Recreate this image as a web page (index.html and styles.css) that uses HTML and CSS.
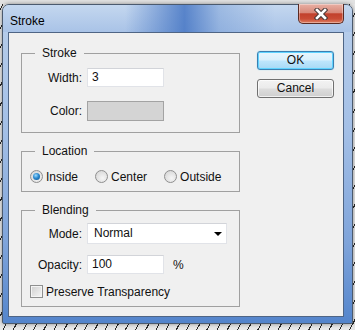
FILE: index.html
```html
<!DOCTYPE html>
<html lang="en">
<head>
  <meta charset="UTF-8" />
  <title>Stroke</title>
  <link rel="stylesheet" href="styles.css">
</head>
<body>

<div class="window">
  <div class="titlebar">
    <span class="title">Stroke</span>
    <div class="close">
      <svg width="14" height="12" viewBox="0 0 14 12">
        <path d="M3 2 L11 10 M11 2 L3 10" stroke="#4a3a38" stroke-width="4.6" stroke-linecap="square" fill="none"/>
        <path d="M3 2 L11 10 M11 2 L3 10" stroke="#ffffff" stroke-width="2.6" stroke-linecap="square" fill="none"/>
      </svg>
    </div>
  </div>

  <div class="client">
    <div class="groups">

      <fieldset class="group group-stroke">
        <legend>Stroke</legend>
        <div class="row">
          <label>Width:</label>
          <div class="field">3</div>
        </div>
        <div class="row row-color">
          <label>Color:</label>
          <div class="swatch"></div>
        </div>
      </fieldset>

      <fieldset class="group group-location">
        <legend>Location</legend>
        <div class="radios">
          <div class="radio-item"><span class="radio checked"></span>Inside</div>
          <div class="radio-item"><span class="radio"></span>Center</div>
          <div class="radio-item"><span class="radio"></span>Outside</div>
        </div>
      </fieldset>

      <fieldset class="group group-blending">
        <legend>Blending</legend>
        <div class="row">
          <label>Mode:</label>
          <div class="select">Normal<span class="arrow"></span></div>
        </div>
        <div class="row row-opacity">
          <label>Opacity:</label>
          <div class="field">100</div>
          <span class="unit">%</span>
        </div>
        <div class="check-row">
          <span class="checkbox"></span>Preserve Transparency
        </div>
      </fieldset>

    </div>

    <div class="buttons">
      <div class="btn btn-default">OK</div>
      <div class="btn">Cancel</div>
    </div>
  </div>
</div>

</body>
</html>
```

FILE: styles.css
```css
body {
  margin: 0;
  width: 355px;
  height: 330px;
  overflow: hidden;
  font-family: 'Liberation Sans', Arial, sans-serif;
  font-size: 12px;
  color: #101010;
  background:
    linear-gradient(#e2e2e2, #e2e2e2) top / 100% 4px no-repeat,
    repeating-linear-gradient(118deg, #e8e8e8 0 4px, #2a2a2a 4px 5px, #e8e8e8 5px 9px);
}
.window {
  box-sizing: border-box;
  width: 351px;
  height: 320px;
  margin: 4px 0 0 2px;
  padding: 0 8px 6px 5px;
  border: 1px solid #4b5a6e;
  border-radius: 7px 7px 2px 2px;
  background: linear-gradient(to bottom, #b9cfeb 0%, #a3bfe6 40%, #7fa4da 75%, #5485cc 100%);
  display: flex;
  flex-direction: column;
  box-shadow: 0 0 4px rgba(0,0,0,0.4);
}
.titlebar {
  height: 27px;
  display: flex;
  align-items: flex-start;
  margin: 0 -8px 0 -5px;
  padding: 0 8px 0 7px;
  border-radius: 6px 6px 0 0;
  background:
    linear-gradient(to right, rgba(170,196,232,0) 0%, rgba(170,196,232,0) 35%, rgba(70,118,196,0.85) 52%, rgba(120,158,214,0.5) 62%, rgba(170,196,232,0) 78%),
    linear-gradient(to bottom, #c4d7ef, #a9c3e7);
}
.title {
  flex: 1;
  line-height: 14px;
  padding-top: 9px;
  color: #000;
}
.close {
  width: 46px;
  height: 20px;
  box-sizing: border-box;
  margin-top: -1px;
  border: 1px solid #5a2a22;
  border-top: none;
  border-radius: 0 0 5px 5px;
  background: linear-gradient(to bottom, #e8b0a4 0%, #d8897a 45%, #c2412c 52%, #c94c35 78%, #de7f62 100%);
  box-shadow: inset 0 0 0 1px rgba(255,255,255,0.35);
  display: flex;
  align-items: center;
  justify-content: center;
}
.close svg {
  display: block;
}
.client {
  flex: 1;
  border: 1px solid #4f6585;
  background: #f0f0f0;
  display: flex;
  align-items: flex-start;
  padding: 13px 0 0 12px;
}
.groups {
  width: 219px;
  display: flex;
  flex-direction: column;
}
.group {
  margin: 0;
  padding: 8px 0 11px 8px;
  border: 1px solid #a0a0a0;
  min-width: 0;
}
.group legend {
  margin-left: 5px;
  padding: 0 7px;
  line-height: 14px;
}
.group-location {
  margin-top: 11px;
  padding: 11px 0 7px 8px;
}
.group-blending {
  margin-top: 11px;
  padding: 6px 0 7px 8px;
}
.row {
  display: flex;
  align-items: center;
}
.row label {
  width: 52px;
  margin-right: 5px;
  text-align: right;
}
.row-color {
  margin-top: 14px;
}
.row-opacity {
  margin-top: 11px;
}
.field {
  box-sizing: border-box;
  width: 77px;
  height: 19px;
  line-height: 17px;
  padding-left: 4px;
  background: #fff;
  border: 1px solid #e1e3e8;
  border-top-color: #d2d4d9;
}
.swatch {
  box-sizing: border-box;
  width: 77px;
  height: 20px;
  background: #d4d4d4;
  border: 1px solid #a3a3a3;
}
.select {
  box-sizing: border-box;
  width: 140px;
  height: 21px;
  line-height: 19px;
  padding-left: 6px;
  background: #fff;
  border: 1px solid #e1e3e8;
  border-top-color: #d2d4d9;
  display: flex;
  align-items: center;
  justify-content: space-between;
  padding-right: 4px;
}
.arrow {
  width: 0;
  height: 0;
  border-left: 4px solid transparent;
  border-right: 4px solid transparent;
  border-top: 4px solid #000;
}
.unit {
  margin-left: 9px;
}
.radios {
  display: flex;
  align-items: center;
  height: 15px;
}
.radio-item {
  display: flex;
  align-items: center;
  margin-right: 17px;
}
.radio {
  box-sizing: border-box;
  width: 13px;
  height: 13px;
  margin-right: 3px;
  border-radius: 50%;
  border: 1px solid #8f8f8f;
  background: radial-gradient(circle at 60% 65%, #f6f6f6 0%, #dcdcdc 70%, #cfcfcf 100%);
  display: flex;
  align-items: center;
  justify-content: center;
}
.radio.checked::after {
  content: "";
  width: 7px;
  height: 7px;
  border-radius: 50%;
  background: radial-gradient(circle at 40% 35%, #9fdcff 0%, #2b8ad0 45%, #0c4c86 100%);
}
.check-row {
  display: flex;
  align-items: center;
  height: 15px;
  margin-top: 10px;
}
.checkbox {
  box-sizing: border-box;
  width: 13px;
  height: 13px;
  margin-right: 3px;
  border: 1px solid #8e8f8f;
  box-shadow: inset 0 0 0 1px #f4f4f4;
  background: linear-gradient(135deg, #cfcfcf, #f6f6f6);
}
.buttons {
  margin: 5px 0 0 17px;
  display: flex;
  flex-direction: column;
  gap: 9px;
}
.btn {
  box-sizing: border-box;
  width: 77px;
  height: 19px;
  line-height: 17px;
  text-align: center;
  border: 1px solid #707070;
  border-radius: 3px;
  background: linear-gradient(to bottom, #f3f3f3 0%, #ebebeb 48%, #dddddd 52%, #cfcfcf 100%);
  box-shadow: inset 0 0 0 1px rgba(255,255,255,0.7);
}
.btn-default {
  border-color: #3c7fb1;
  background: linear-gradient(to bottom, #eaf6fd 0%, #d9f0fc 48%, #bee6fd 52%, #a7d9f5 100%);
  box-shadow: inset 0 0 0 1px #5fd3ff, 0 0 1px #5fd3ff;
}
```
